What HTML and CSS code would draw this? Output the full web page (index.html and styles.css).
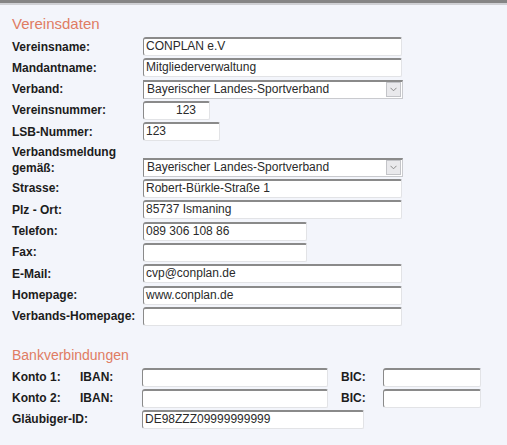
FILE: index.html
```html
<!DOCTYPE html>
<html lang="de">
<head>
<meta charset="utf-8">
<title>Vereinsdaten</title>
<link rel="stylesheet" href="styles.css">
</head>
<body>
<div class="topbar"></div>
<section class="section">
  <h2 class="heading first">Vereinsdaten</h2>
  <div class="form">
    <label class="label">Vereinsname:</label>
    <div class="field w-full">CONPLAN e.V</div>

    <label class="label">Mandantname:</label>
    <div class="field w-full">Mitgliederverwaltung</div>

    <label class="label">Verband:</label>
    <div class="select w-select"><span class="select-text">Bayerischer Landes-Sportverband</span><span class="arrow"><svg width="7" height="5" viewBox="0 0 7 5"><path d="M0.5 0.8 L3.5 3.8 L6.5 0.8" fill="none" stroke="#8a8a8a" stroke-width="1"/></svg></span></div>

    <label class="label">Vereinsnummer:</label>
    <div class="field w-num right">123</div>

    <label class="label">LSB-Nummer:</label>
    <div class="field w-lsb">123</div>

    <label class="label two">Verbandsmeldung<br>gemäß:</label>
    <div class="select w-select end"><span class="select-text">Bayerischer Landes-Sportverband</span><span class="arrow"><svg width="7" height="5" viewBox="0 0 7 5"><path d="M0.5 0.8 L3.5 3.8 L6.5 0.8" fill="none" stroke="#8a8a8a" stroke-width="1"/></svg></span></div>

    <label class="label">Strasse:</label>
    <div class="field w-full">Robert-Bürkle-Straße 1</div>

    <label class="label">Plz - Ort:</label>
    <div class="field w-full">85737 Ismaning</div>

    <label class="label">Telefon:</label>
    <div class="field w-mid">089 306 108 86</div>

    <label class="label">Fax:</label>
    <div class="field w-mid"></div>

    <label class="label">E-Mail:</label>
    <div class="field w-full">cvp@conplan.de</div>

    <label class="label">Homepage:</label>
    <div class="field w-full">www.conplan.de</div>

    <label class="label">Verbands-Homepage:</label>
    <div class="field w-full"></div>
  </div>
</section>
<section class="section bank">
  <h2 class="heading">Bankverbindungen</h2>
  <div class="bank-grid">
    <span class="label">Konto 1:</span>
    <span class="label">IBAN:</span>
    <div class="field w-iban"></div>
    <span class="label">BIC:</span>
    <div class="field w-bic"></div>

    <span class="label">Konto 2:</span>
    <span class="label">IBAN:</span>
    <div class="field w-iban"></div>
    <span class="label">BIC:</span>
    <div class="field w-bic"></div>

    <span class="label span2">Gläubiger-ID:</span>
    <div class="field w-gid span3">DE98ZZZ09999999999</div>
  </div>
</section>
</body>
</html>
```

FILE: styles.css
```css
html, body {
  margin: 0;
  padding: 0;
}
body {
  background: #f3f5fb;
  font-family: "Liberation Sans", Arial, sans-serif;
  color: #1c1c1c;
  width: 507px;
  height: 445px;
  overflow: hidden;
}
.topbar {
  height: 3px;
  background: #858585;
  border-bottom: 2px solid #cfd0d4;
}
.section {
  padding-left: 12px;
}
.heading {
  margin: 9px 0 7px 0;
  font-size: 14px;
  line-height: 16px;
  font-weight: normal;
  color: #e07c63;
}
.heading.first {
  font-size: 15px;
  margin: 11px 0 5px 0;
}
.form {
  display: grid;
  grid-template-columns: 131px 1fr;
  row-gap: 2.33px;
  align-items: center;
}
.label {
  font-size: 12px;
  font-weight: bold;
  line-height: 16px;
  color: #1c1c1c;
}
.label.two {
  line-height: 16.5px;
}
.field {
  box-sizing: border-box;
  height: 19px;
  background: #fff;
  border: 1px solid;
  border-color: #8a8a8a #e2e3e6 #e2e3e6 #8a8a8a;
  border-top-width: 2px;
  border-radius: 3px 2px 2px 3px;
  font-size: 12px;
  line-height: 15px;
  padding: 0 2px;
  color: #2a2a2a;
  white-space: nowrap;
  overflow: hidden;
}
.field.right {
  text-align: right;
  padding-right: 13px;
}
.w-full { width: 259px; }
.w-mid { width: 164px; }
.w-num { width: 67px; }
.w-lsb { width: 77px; }
.select {
  box-sizing: border-box;
  height: 19px;
  width: 260px;
  background: #fff;
  border: 1px solid;
  border-color: #8a8a8a #c9cace #c9cace #8a8a8a;
  border-top-width: 2px;
  display: flex;
  align-items: center;
  font-size: 12px;
  color: #2a2a2a;
}
.select.end {
  align-self: end;
}
.select-text {
  flex: 1;
  padding-left: 3px;
  line-height: 15px;
}
.arrow {
  box-sizing: border-box;
  width: 15px;
  height: 15px;
  margin-right: 1px;
  background: #e9e9ec;
  border: 1px solid #c3c4c8;
  display: flex;
  align-items: center;
  justify-content: center;
}
.bank .heading {
  margin-top: 21px;
  margin-bottom: 5px;
}
.bank-grid {
  display: grid;
  grid-template-columns: 68px 62px 199px 42px 98px;
  row-gap: 2px;
  align-items: center;
}
.w-iban { width: 186px; }
.w-bic { width: 98px; }
.w-gid { width: 222px; }
.span2 { grid-column: span 2; }
.span3 { grid-column: span 3; }
```
